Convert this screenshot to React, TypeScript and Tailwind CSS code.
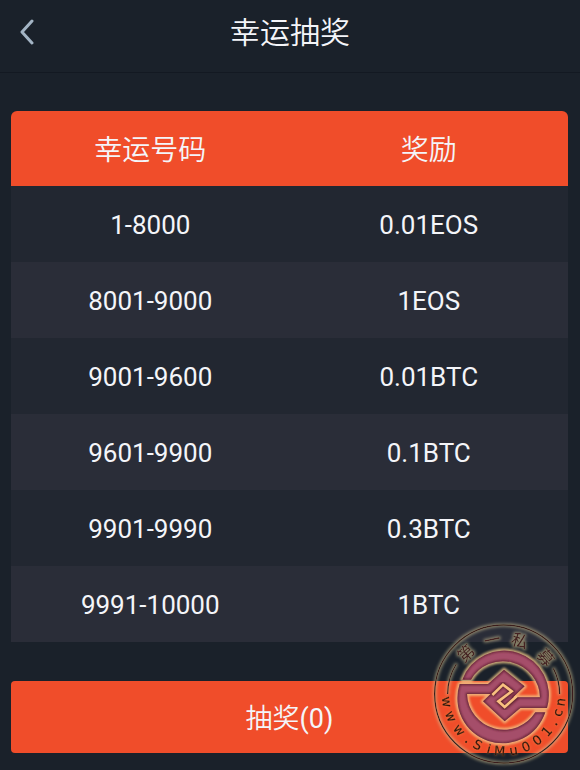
import React from 'react';

const prizes = [
    { range: '1-8000', reward: '0.01EOS' },
    { range: '8001-9000', reward: '1EOS' },
    { range: '9001-9600', reward: '0.01BTC' },
    { range: '9601-9900', reward: '0.1BTC' },
    { range: '9901-9990', reward: '0.3BTC' },
    { range: '9991-10000', reward: '1BTC' },
];

// angles are in degrees around the centre of the seal
const sealTop = [
    { char: '第', angle: -43 },
    { char: '一', angle: -12 },
    { char: '私', angle: 17 },
    { char: '募', angle: 49 },
];

const sealBottom = [
    { char: 'w', angle: 82 },
    { char: 'w', angle: 67 },
    { char: 'w', angle: 51 },
    { char: '.', angle: 38 },
    { char: 'S', angle: 27 },
    { char: 'i', angle: 15 },
    { char: 'M', angle: 4 },
    { char: 'u', angle: -10 },
    { char: '0', angle: -23 },
    { char: '0', angle: -36 },
    { char: '1', angle: -49 },
    { char: '.', angle: -60 },
    { char: 'c', angle: -71 },
    { char: 'n', angle: -82 },
];

const emblem =
    'M112 194A134 134 0 0 1 366 279H286L239 319L174 259L197 237H126A111 111 0 0 0 331 292H361A134 134 0 0 1 104 207H189L237 164L299 214L264 247H345A111 111 0 0 0 138 194Z';

const Seal = () => (
    <svg
        viewBox="0 0 465 465"
        className="absolute right-0 bottom-0 w-[155px] h-[155px] pointer-events-none"
        aria-hidden="true"
    >
        <defs>
            <filter id="glow" x="-20%" y="-20%" width="140%" height="140%">
                <feMorphology in="SourceAlpha" operator="dilate" radius="4" result="fat" />
                <feGaussianBlur in="fat" stdDeviation="4" result="soft" />
                <feFlood floodColor="#d8c898" floodOpacity="0.55" />
                <feComposite in2="soft" operator="in" result="halo" />
                <feMerge>
                    <feMergeNode in="halo" />
                    <feMergeNode in="SourceGraphic" />
                </feMerge>
            </filter>
            <filter id="faint" x="-20%" y="-20%" width="140%" height="140%">
                <feGaussianBlur in="SourceAlpha" stdDeviation="4" result="soft" />
                <feFlood floodColor="#f0a050" floodOpacity="0.5" />
                <feComposite in2="soft" operator="in" result="halo" />
                <feMerge>
                    <feMergeNode in="halo" />
                    <feMergeNode in="SourceGraphic" />
                </feMerge>
            </filter>
            <filter id="blur">
                <feGaussianBlur stdDeviation="3" />
            </filter>
            <clipPath id="emblem">
                <path d={emblem} />
            </clipPath>
        </defs>

        <g filter="url(#glow)" fill="none" stroke="#3a1a1a" strokeWidth="4">
            <circle cx="236" cy="237" r="207" />
            <path d="M68 237A168 168 0 0 1 94 147" />
            <path d="M385 160A168 168 0 0 1 404 237" />
        </g>

        <g filter="url(#glow)" fill="#452024" textAnchor="middle">
            {sealTop.map(({ char, angle }) => (
                <text
                    key={char}
                    x="236"
                    y="89"
                    transform={`rotate(${angle} 236 237)`}
                    className="text-[50px] font-medium font-['Noto_Sans_CJK_SC',sans-serif]"
                >
                    {char}
                </text>
            ))}
        </g>

        <g filter="url(#faint)" fill="#32120e" stroke="#32120e" strokeWidth="1" textAnchor="middle">
            {sealBottom.map(({ char, angle }) => (
                <text
                    key={angle}
                    x="236"
                    y="422"
                    transform={`rotate(${angle} 236 237)`}
                    className="text-[39px] font-['DejaVu_Sans',sans-serif]"
                >
                    {char}
                </text>
            ))}
        </g>

        <path d={emblem} fill="none" stroke="#f0c888" strokeWidth="12" strokeLinejoin="round" opacity="0.8" filter="url(#blur)" />
        <path d={emblem} fill="#a54e6a" />
        {/* dark inner edge, kept inside the emblem */}
        <g clipPath="url(#emblem)">
            <path d={emblem} fill="none" stroke="#5a1f2c" strokeWidth="6" filter="url(#blur)" />
            <path d="M201 241L234 208L261 229L221 260L239 277L276 245" fill="none" stroke="#5a1f2c" strokeWidth="14" filter="url(#blur)" />
        </g>
        <path d="M202 240L234 209L260 229L220 259L239 276L275 244" fill="none" stroke="#f9c080" strokeWidth="8" />
    </svg>
);

const App = () => {
    return (
        <div className="relative min-h-screen bg-[#1a212a] text-[#f4f5f9] font-[Roboto,'Noto_Sans_CJK_SC',sans-serif]">
            <header className="grid grid-cols-[56px_1fr_56px] items-center h-[73px] pb-2 border-b border-[#131922]">
                <button aria-label="返回" className="flex h-full items-center pl-5 cursor-pointer">
                    <svg viewBox="0 0 14 26" className="w-[14px] h-[26px]" fill="none" stroke="#a3b4c4" strokeWidth="3" strokeLinecap="round" strokeLinejoin="round">
                        <path d="M12 2L2 13L12 24" />
                    </svg>
                </button>
                <h1 className="text-center text-[30px] font-[350]">幸运抽奖</h1>
            </header>

            <main className="px-3 pt-[38px] pl-[11px]">
                <table className="w-full table-fixed text-center text-[26px]">
                    <thead>
                        <tr className="h-[75px] bg-[#f04d2a] text-[28px]">
                            <th className="rounded-tl-md pt-1 font-[350]">幸运号码</th>
                            <th className="rounded-tr-md pt-1 font-[350]">奖励</th>
                        </tr>
                    </thead>
                    <tbody>
                        {prizes.map((prize) => (
                            <tr key={prize.range} className="h-[76px] odd:bg-[#222731] even:bg-[#2a2d38]">
                                <td className="pt-0.5">{prize.range}</td>
                                <td className="pt-0.5">{prize.reward}</td>
                            </tr>
                        ))}
                    </tbody>
                </table>

                <button className="mt-[39px] h-[72px] w-full rounded-sm bg-[#f04d2a] pt-1 text-[27px] font-[350] cursor-pointer">
                    抽奖<span className="font-normal">(0)</span>
                </button>
            </main>

            <Seal />
        </div>
    );
};

export default App;
